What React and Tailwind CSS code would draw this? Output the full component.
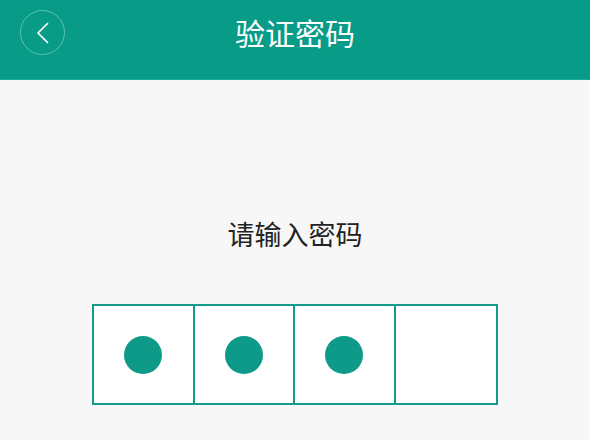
export default function App() {
  const filled = [true, true, true, false];
  return (
    <div
      className="w-[590px] h-[440px] bg-[#f7f7f7] overflow-hidden"
      style={{ fontFamily: '"Noto Sans CJK SC", "Noto Sans", sans-serif' }}
    >
      <div className="h-[80px] bg-[#089b88] border-b border-[#1aa897] relative">
        <div className="h-[64px] flex items-center justify-center">
          <span className="text-white text-[30px] leading-none">验证密码</span>
        </div>
        <div className="absolute left-[20px] top-[10px] w-[45px] h-[45px] rounded-full border border-[#5cc2b5] flex items-center justify-center">
          <svg width="24" height="24" viewBox="0 0 24 24" fill="none">
            <path d="M16.5 2.5 L7 12 L16.5 21.5" stroke="white" strokeWidth="1.7" strokeLinecap="round" strokeLinejoin="round" />
          </svg>
        </div>
      </div>
      <div className="pt-[136px] flex flex-col items-center">
        <div className="text-[27px] leading-[36px] text-[#222]">请输入密码</div>
        <div className="mt-[52px] w-[406px] h-[101px] grid grid-cols-4 border-2 border-[#129a8a] bg-white">
          {filled.map((f, i) => (
            <div
              key={i}
              className={`flex items-center justify-center ${i < 3 ? "border-r-2 border-[#129a8a]" : ""}`}
            >
              {f && <div className="w-[38px] h-[38px] rounded-full bg-[#0e9a88]" />}
            </div>
          ))}
        </div>
      </div>
    </div>
  );
}
